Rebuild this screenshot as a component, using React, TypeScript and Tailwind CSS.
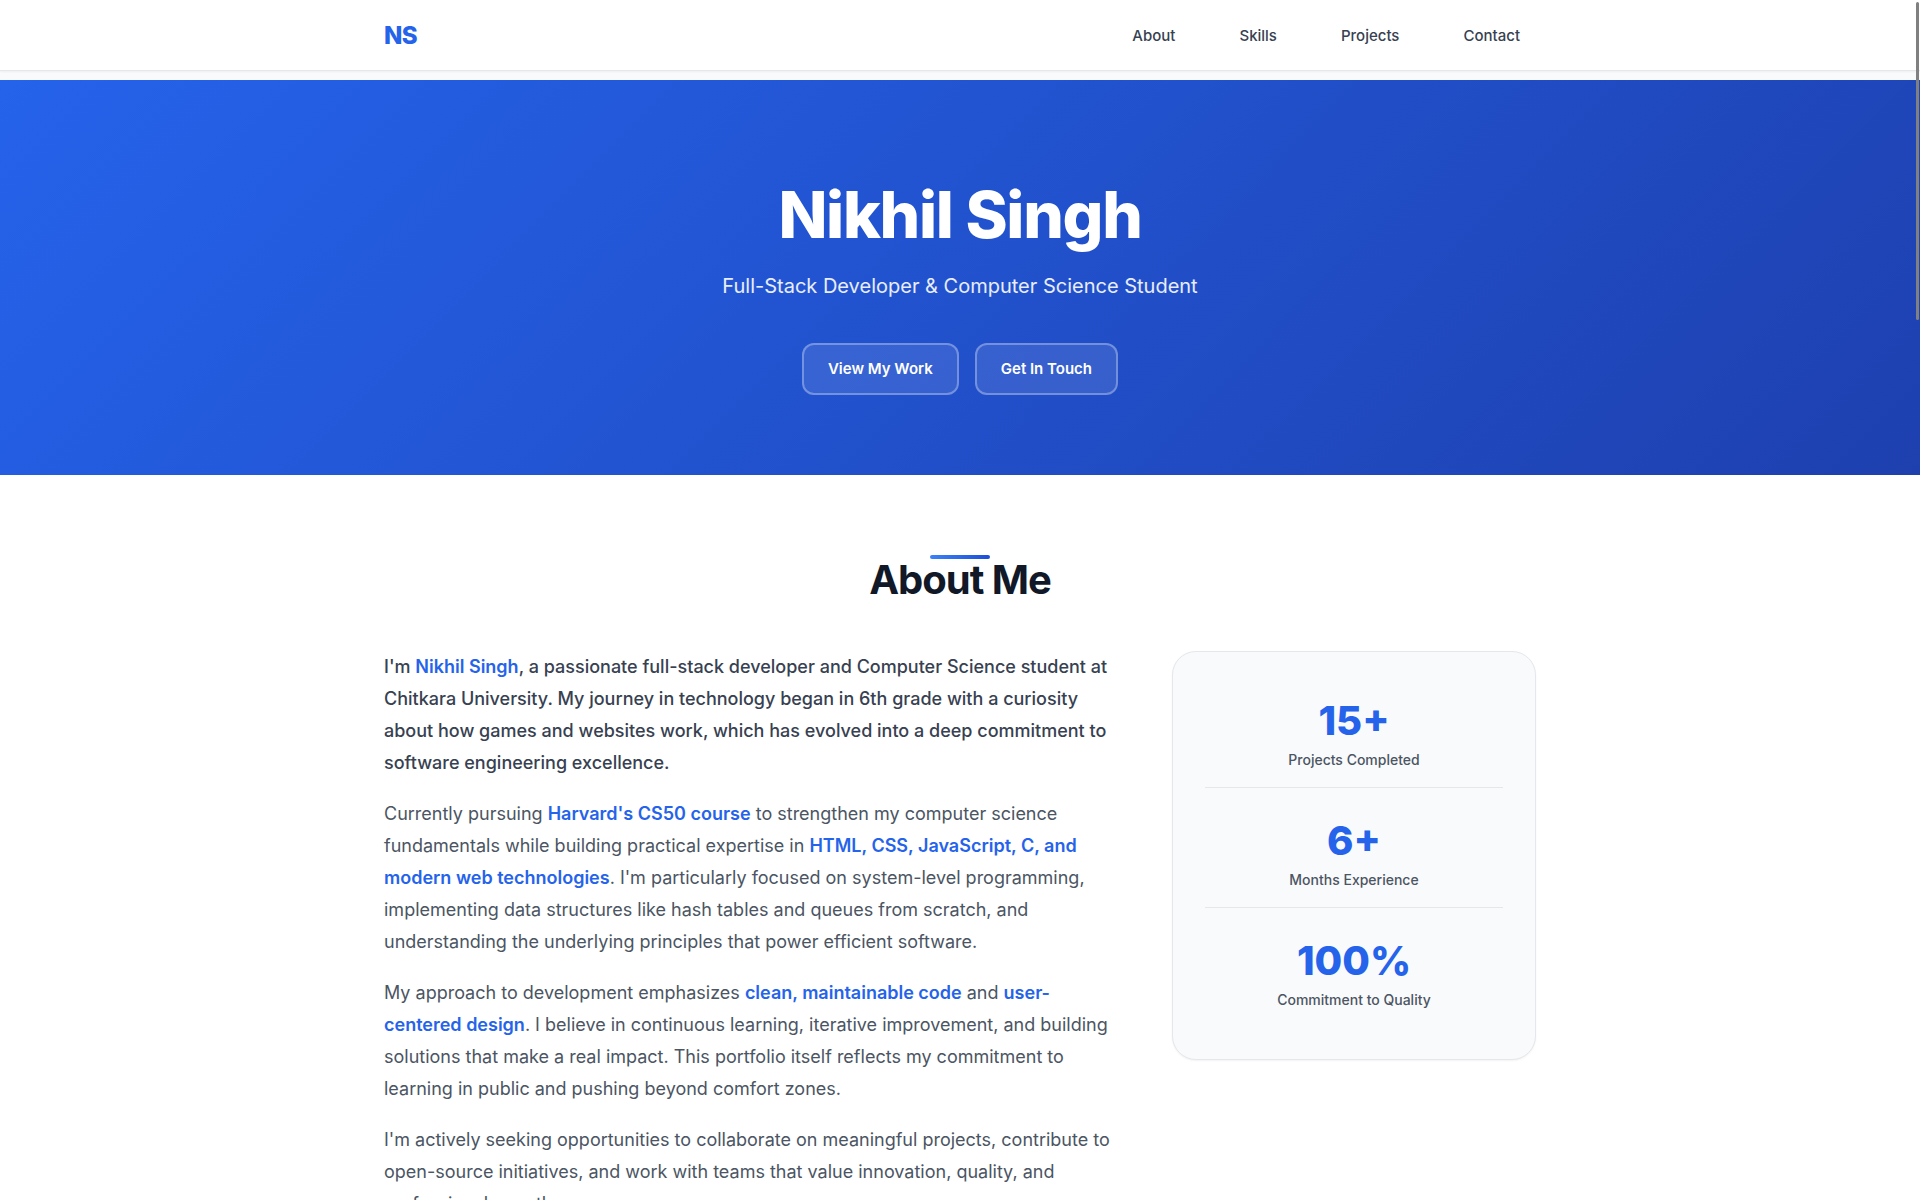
import type { ReactNode } from "react";

const navLinks = [
  { label: "About", href: "#about" },
  { label: "Skills", href: "#skills" },
  { label: "Projects", href: "#projects" },
  { label: "Contact", href: "#contact" },
];

const stats = [
  { value: "15+", label: "Projects Completed" },
  { value: "6+", label: "Months Experience" },
  { value: "100%", label: "Commitment to Quality" },
];

function Highlight({ children }: { children: ReactNode }) {
  return <strong className="font-semibold text-[#2563eb]">{children}</strong>;
}

function HeroLink({ href, children }: { href: string; children: ReactNode }) {
  return (
    <a
      href={href}
      className="rounded-xl border-2 border-white/30 bg-white/10 px-6 py-3 text-[15px] leading-6 font-semibold text-white"
    >
      {children}
    </a>
  );
}

function Header() {
  return (
    <header className="relative mb-[9px] border-b border-[#e5e7eb] bg-white shadow-xs">
      <nav className="mx-auto flex h-[70px] max-w-[1200px] items-center justify-between px-6 pt-0.5">
        <a href="#home" className="text-2xl leading-[42px] font-extrabold tracking-tight text-[#2563eb]">
          NS
        </a>
        <ul className="flex gap-8">
          {navLinks.map((link) => (
            <li key={link.label}>
              <a href={link.href} className="block px-4 py-2 text-[15px] leading-[26px] font-medium text-[#374151]">
                {link.label}
              </a>
            </li>
          ))}
        </ul>
      </nav>
    </header>
  );
}

function Hero() {
  return (
    <section
      id="home"
      className="flex flex-col items-center bg-[linear-gradient(135deg,#2563eb_0%,#1e40af_100%)] px-6 pt-24 pb-20 text-center text-white"
    >
      <h1 className="mb-4 text-[64px] leading-[77px] font-extrabold tracking-[-0.02em]">Nikhil Singh</h1>
      <p className="mb-10 text-xl leading-[34px] text-white/90">
        Full-Stack Developer &amp; Computer Science Student
      </p>
      <div className="flex flex-wrap justify-center gap-4">
        <HeroLink href="#projects">View My Work</HeroLink>
        <HeroLink href="#contact">Get In Touch</HeroLink>
      </div>
    </section>
  );
}

function StatsCard() {
  return (
    <aside className="flex flex-col gap-4 self-start rounded-3xl border border-[#e5e7eb] bg-[#f9fafb] p-8 text-center shadow-xs">
      {stats.map((stat) => (
        <div key={stat.label} className="border-b border-[#e5e7eb] py-4 last:border-b-0">
          <div className="mb-1.5 text-[40px] leading-[42px] font-extrabold text-[#2563eb]">{stat.value}</div>
          <div className="text-sm leading-[23px] font-medium text-[#4b5563]">{stat.label}</div>
        </div>
      ))}
    </aside>
  );
}

function About() {
  return (
    <section id="about" className="bg-white py-20">
      <div className="mx-auto max-w-[1200px] px-6">
        <div className="relative mb-[46px] text-center">
          <span className="absolute top-0 left-1/2 h-1 w-15 -translate-x-1/2 rounded-xs bg-[linear-gradient(90deg,#3b82f6,#1d4ed8)]" />
          <h2 className="relative text-[40px] leading-[50px] font-bold tracking-tight text-[#111827]">About Me</h2>
        </div>
        <div className="grid gap-15 md:grid-cols-[2fr_1fr]">
          <div className="flex flex-col gap-[19px] text-[18px] leading-8 text-[#4b5563]">
            <p className="font-medium text-[#374151]">
              I'm <Highlight>Nikhil Singh</Highlight>, a passionate full-stack developer and Computer Science student
              at Chitkara University. My journey in technology began in 6th grade with a curiosity about how games and
              websites work, which has evolved into a deep commitment to software engineering excellence.
            </p>
            <p>
              Currently pursuing <Highlight>Harvard's CS50 course</Highlight> to strengthen my computer science
              fundamentals while building practical expertise in{" "}
              <Highlight>HTML, CSS, JavaScript, C, and modern web technologies</Highlight>. I'm particularly focused on
              system-level programming, implementing data structures like hash tables and queues from scratch, and
              understanding the underlying principles that power efficient software.
            </p>
            <p>
              My approach to development emphasizes <Highlight>clean, maintainable code</Highlight> and{" "}
              <Highlight>user-centered design</Highlight>. I believe in continuous learning, iterative improvement, and
              building solutions that make a real impact. This portfolio itself reflects my commitment to learning in
              public and pushing beyond comfort zones.
            </p>
            <p>
              I'm actively seeking opportunities to collaborate on meaningful projects, contribute to open-source
              initiatives, and work with teams that value innovation, quality, and professional growth.
            </p>
          </div>
          <StatsCard />
        </div>
      </div>
    </section>
  );
}

export default function App() {
  return (
    <div className="min-h-screen bg-[#f9fafb] font-['Inter',sans-serif] antialiased">
      <Header />
      <main>
        <Hero />
        <About />
      </main>
      <div className="fixed top-0.5 right-px h-[318px] w-[3px] rounded-full bg-[#808080]" />
    </div>
  );
}
